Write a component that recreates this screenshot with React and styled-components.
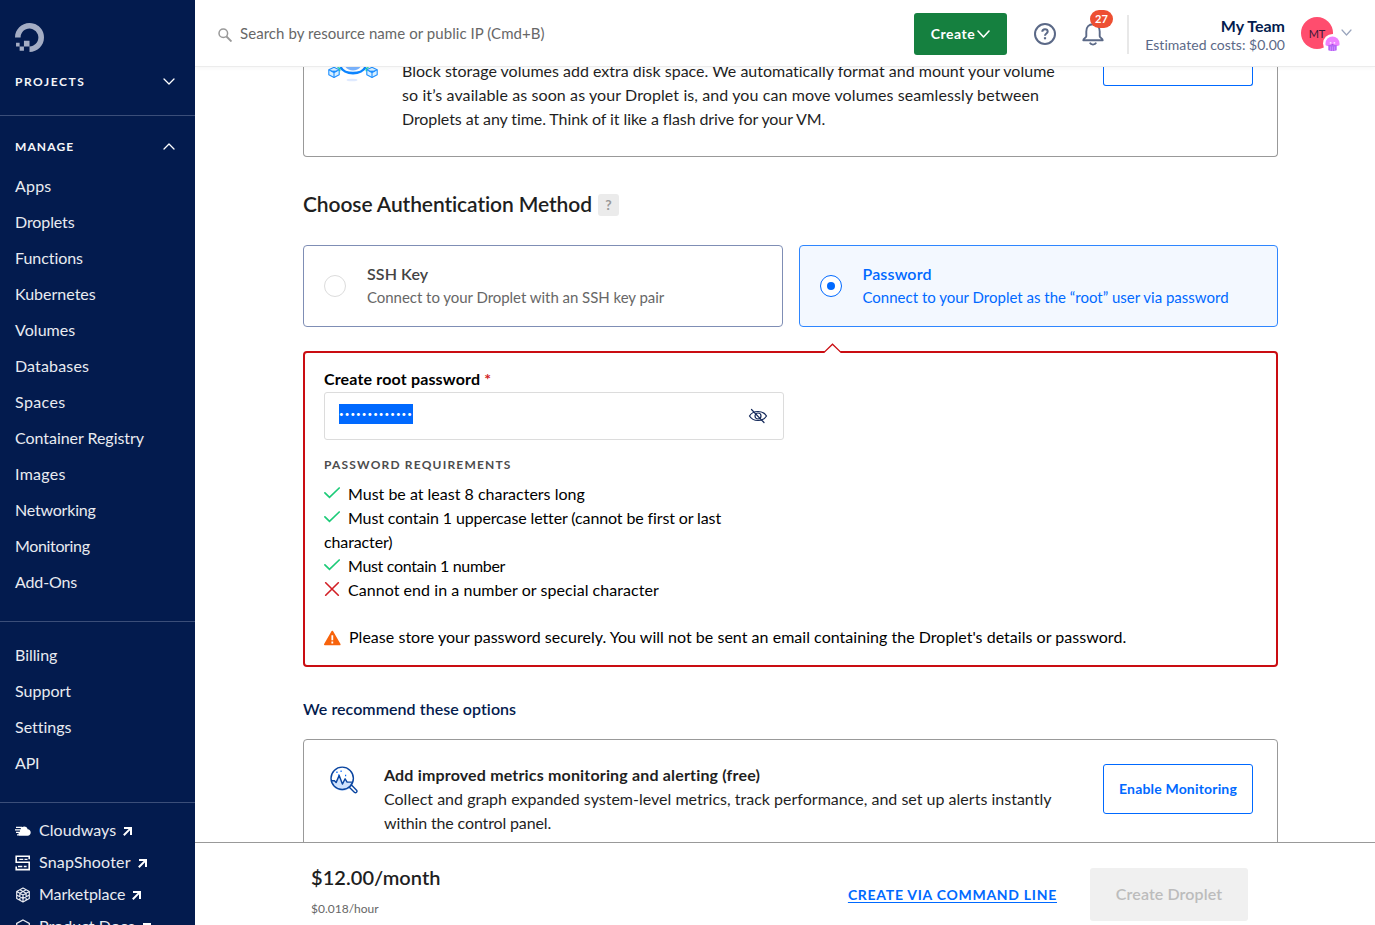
import React from 'react';
import styled, { createGlobalStyle, css } from 'styled-components';

const GlobalStyle = createGlobalStyle`
  * { box-sizing: border-box; }
  body {
    margin: 0;
    background: #fff;
    color: #1f1f1f;
    font-family: Lato, "Liberation Sans", sans-serif;
    font-size: 16px;
    line-height: 24px;
    font-variant-ligatures: none;
  }
  h2, h3, p, ul { margin: 0; padding: 0; }
  ul { list-style: none; }
  svg { display: block; flex: none; }
  button { font-family: inherit; }
`;

const spaced = css`
  letter-spacing: ${(p) => p.$ls || 0}px;
`;

/* ---------- shell ---------- */

const Shell = styled.div`
  display: flex;
  height: 925px;
  overflow: hidden;
`;

const Main = styled.main`
  flex: 1;
  min-width: 0;
  display: flex;
  flex-direction: column;
`;

/* ---------- sidebar ---------- */

const Sidebar = styled.nav`
  width: 195px;
  flex: none;
  height: 925px;
  overflow: hidden;
  background: #031b4e;
  color: #e9ebf1;
`;

const LogoArea = styled.div`
  padding: 23px 15px 0;
  height: 64px;
`;

const NavSection = styled.div`
  border-bottom: 1px solid #3b4e79;
  padding: ${(p) => p.$pad};
`;

const SectionTitle = styled.div`
  display: flex;
  align-items: center;
  justify-content: space-between;
  height: 36px;
  font-size: 12px;
  font-weight: 700;
  color: #f5f6f9;
  padding-right: 5px;
  ${spaced}

  svg { margin-bottom: 1px; }
`;

const NavList = styled.div`
  margin-top: 4px;
`;

const NavItem = styled.div`
  height: 36px;
  line-height: 34px;
  ${spaced}
`;

const ExternalList = styled.div`
  padding: 12px 15px 0;
`;

const ExternalItem = styled.div`
  display: flex;
  align-items: center;
  height: 32px;
  gap: 8px;
  color: #e9ebf1;
  ${spaced}

  span { margin: -2px -1px 0 0; }
`;

/* ---------- header ---------- */

const Header = styled.header`
  flex: none;
  height: 67px;
  display: flex;
  align-items: center;
  padding: 0 23px 0 23px;
  border-bottom: 1px solid #ececec;
  box-shadow: 0 2px 4px rgba(0, 0, 0, 0.03);
  position: relative;
  z-index: 1;
  background: #fff;

  > svg { margin-top: 3px; }
`;

const SearchText = styled.div`
  flex: 1;
  margin-top: -1px;
  padding-left: 8px;
  font-size: 15px;
  color: #676767;
  ${spaced}
`;

const CreateButton = styled.button`
  display: flex;
  align-items: center;
  justify-content: center;
  gap: 2px;
  width: 93px;
  height: 42px;
  margin-top: 1px;
  padding: 0;
  border: 0;
  border-radius: 3px;
  background: #15803f;
  color: #fff;
  font-size: 14px;
  font-weight: 700;
  ${spaced}
`;

const HelpIcon = styled.div`
  margin: 2px 0 0 27px;
`;

const Bell = styled.div`
  position: relative;
  margin: 1px 0 0 26px;
`;

const Count = styled.span`
  position: absolute;
  left: 8px;
  top: -12px;
  width: 23px;
  height: 18px;
  border-radius: 9px;
  background: #ed4f32;
  color: #fff;
  font-size: 11px;
  font-weight: 700;
  line-height: 18px;
  text-align: center;
`;

const Divider = styled.div`
  width: 2px;
  height: 39px;
  margin: 2px 0 0 23px;
  background: #e8e8e8;
`;

const Team = styled.div`
  width: 156px;
  margin-top: 5px;
  text-align: right;
`;

const TeamName = styled.div`
  height: 19px;
  line-height: 17px;
  font-weight: 700;
  color: #031b4e;
`;

const TeamCost = styled.div`
  height: 18px;
  line-height: 18px;
  font-size: 14px;
  color: #5b6987;
  ${spaced}
`;

const Avatar = styled.div`
  position: relative;
  width: 32px;
  height: 32px;
  margin-left: 16px;
  border-radius: 50%;
  background: #ff4d6e;
  color: #3a1838;
  font-size: 11px;
  line-height: 33px;
  text-align: center;
`;

const AvatarBadge = styled.div`
  position: absolute;
  left: 22px;
  top: 17px;
`;

const HeaderChevron = styled.div`
  margin: 0 0 1px 8px;
`;

/* ---------- content ---------- */

const Content = styled.div`
  flex: 1;
  min-height: 0;
  overflow: hidden;
  padding: 0 97px 0 108px;
`;

const OptionCard = styled.section`
  display: flex;
  align-items: flex-start;
  border: 1px solid #999;
  border-radius: ${(p) => (p.$cut ? '0 0 4px 4px' : '4px')};
  ${(p) => p.$cut && css`border-top: 0;`}
  height: ${(p) => p.$h}px;
  padding: ${(p) => (p.$cut ? '0 24px' : '24px 24px 0')};
`;

const VolumeIcon = styled.div`
  width: 74px;
`;

const MetricsIcon = styled.div`
  width: 56px;
  padding: 2px 0 0 2px;
`;

const OptionText = styled.div`
  flex: 1;
  margin-top: ${(p) => p.$top || 0}px;
  white-space: nowrap;
`;

const OptionTitle = styled.div`
  font-weight: 700;
  ${spaced}
`;

const Line = styled.div`
  height: 24px;
  ${spaced}
`;

const OutlineButton = styled.button`
  width: 150px;
  height: ${(p) => (p.$cut ? 19 : 50)}px;
  border: 1px solid #0069ff;
  ${(p) => p.$cut && css`border-top: 0;`}
  border-radius: ${(p) => (p.$cut ? '0 0 3px 3px' : '3px')};
  padding: 0 0 2px;
  background: #fff;
  color: #0069ff;
  font-size: 14px;
  font-weight: 700;
  ${spaced}
`;

const Heading = styled.h2`
  display: flex;
  align-items: center;
  gap: 6px;
  height: 30px;
  margin: 32px 0 26px;
  font-size: 21px;
  font-weight: 600;
  color: #1f1f1f;
  ${spaced}
`;

const HelpBadge = styled.span`
  width: 21px;
  height: 22px;
  margin-top: 2px;
  border-radius: 3px;
  background: #ebebeb;
  color: #999;
  font-size: 14px;
  font-weight: 700;
  line-height: 21px;
  text-align: center;
`;

const Methods = styled.div`
  display: grid;
  grid-template-columns: 1fr 1fr;
  gap: 16px;
`;

const MethodCard = styled.div`
  display: flex;
  align-items: center;
  height: 82px;
  padding-left: 20px;
  border: 1px solid ${(p) => (p.$on ? '#2e86ff' : '#7f8eb5')};
  border-radius: 4px;
  background: ${(p) => (p.$on ? '#f3f8ff' : '#fff')};
  color: ${(p) => (p.$on ? '#0069ff' : '#676767')};
`;

const Radio = styled.span`
  display: grid;
  place-items: center;
  width: 22px;
  height: 22px;
  margin-right: 21px;
  border: 1px solid ${(p) => (p.$on ? '#0069ff' : '#dcdcdc')};
  border-radius: 50%;
  background: #fff;

  &::after {
    content: '';
    width: 8px;
    height: 8px;
    border-radius: 50%;
    background: ${(p) => (p.$on ? '#0069ff' : 'transparent')};
  }
`;

const MethodText = styled.div`
  margin-top: -2px;
`;

const MethodTitle = styled.div`
  font-weight: 600;
  color: ${(p) => (p.$on ? '#0069ff' : '#444')};
  ${spaced}
`;

const MethodNote = styled.div`
  height: 23px;
  line-height: 23px;
  font-size: 15px;
  ${spaced}
`;

const Panel = styled.section`
  position: relative;
  height: 316px;
  margin-top: 24px;
  padding: 14px 19px 0;
  border: 2px solid #ca0d12;
  border-radius: 4px;
  color: #000;
`;

const Caret = styled.svg`
  position: absolute;
  left: 517.5px;
  top: -10px;
`;

const FieldLabel = styled.div`
  height: 25px;
  font-weight: 700;
  ${spaced}

  span { color: #d21f25; }
`;

const PasswordField = styled.div`
  display: flex;
  align-items: center;
  justify-content: space-between;
  width: 460px;
  height: 48px;
  padding: 0 15px 0 14px;
  border: 1px solid #dcdcdc;
  border-radius: 3px;
`;

const Selection = styled.span`
  width: 74px;
  height: 20px;
  margin-bottom: 4px;
  overflow: hidden;
  background: #0069ff;
  color: #fff;
  font-size: 8px;
  line-height: 21px;
  ${spaced}
`;

const RequirementsTitle = styled.h3`
  height: 18px;
  margin-top: 16px;
  font-size: 12px;
  font-weight: 700;
  line-height: 18px;
  color: #4d4d4d;
  ${spaced}
`;

const Requirements = styled.ul`
  width: 460px;
  margin-top: 8px;
`;

const Requirement = styled.li`
  ${spaced}

  svg {
    display: inline-block;
    margin-right: 8px;
    vertical-align: ${(p) => p.$va || 1}px;
  }
`;

const Warning = styled.div`
  display: flex;
  align-items: center;
  gap: 8px;
  height: 24px;
  margin-top: 23px;
  white-space: nowrap;
  ${spaced}

  svg { margin-top: 2px; }
`;

const SubHeading = styled.h3`
  height: 24px;
  margin: 30px 0 18px;
  font-size: 16px;
  font-weight: 600;
  color: #031b4e;
  ${spaced}
`;

/* ---------- footer ---------- */

const Footer = styled.footer`
  flex: none;
  display: flex;
  align-items: flex-start;
  height: 83px;
  padding: 25px 127px 0 116px;
  border-top: 1px solid #999;
  background: #fff;
`;

const Price = styled.div`
  flex: 1;
  margin-top: -5px;
`;

const Monthly = styled.div`
  height: 28px;
  line-height: 28px;
  font-size: 20px;
  font-weight: 600;
  ${spaced}
`;

const Hourly = styled.div`
  margin-top: 8px;
  height: 20px;
  line-height: 20px;
  font-size: 12px;
  color: #676767;
`;

const CommandLink = styled.a`
  margin: 15px 33px 0 0;
  font-size: 14px;
  font-weight: 700;
  color: #0069ff;
  text-decoration: underline;
  text-decoration-thickness: 1px;
  text-underline-offset: 2px;
  ${spaced}
`;

const DropletButton = styled.button`
  width: 158px;
  height: 53px;
  padding: 0 0 3px;
  border: 0;
  border-radius: 3px;
  background: #f0f0f0;
  color: #bcbcbc;
  font-size: 16px;
  font-weight: 600;
  ${spaced}
`;

/* ---------- icons ---------- */

const Chevron = ({ up, color = '#fff', w = 12, h = 7, sw = 1.3 }) => (
  <svg width={w} height={h} viewBox={`0 0 ${w} ${h}`} fill="none" stroke={color} strokeWidth={sw} strokeLinecap="round" strokeLinejoin="round">
    <path d={up ? `M1 ${h - 1}L${w / 2} 1L${w - 1} ${h - 1}` : `M1 1L${w / 2} ${h - 1}L${w - 1} 1`} />
  </svg>
);

const Logo = () => (
  <svg width="29" height="29" viewBox="0 0 24 24" fill="#a4adc4">
    <path d="M12.04 0C5.408-.02.005 5.37.005 11.992h4.638c0-4.923 4.882-8.731 10.064-6.855a6.95 6.95 0 0 1 4.147 4.148c1.889 5.177-1.924 10.055-6.84 10.064v-4.61H7.391v4.623h4.61V24c7.86 0 13.967-7.588 11.397-15.83-1.115-3.59-3.985-6.446-7.575-7.575A12.8 12.8 0 0 0 12.039 0zM7.39 19.362H3.828v3.564H7.39zm-3.563 0v-2.978H.85v2.978z" />
  </svg>
);

const ArrowOut = () => (
  <svg width="9" height="9" viewBox="0 0 9 9" fill="none" stroke="#fff" strokeWidth="2">
    <path d="M1 1.1h7V8M7.6 1.4L0.8 8.2" />
  </svg>
);

const CloudwaysIcon = () => (
  <svg width="16" height="16" viewBox="0 0 16 16">
    <path d="M5.300 12.700c-1.200 0-1.900-.8-1.900-1.700s.6-1.600 1.500-1.800C4.700 6.300 6.400 3.400 9.100 3.400c2 0 3.300 1.300 3.500 2.800 1.900.1 3.100 1.500 3.100 3.300 0 1.900-1.300 3.200-3.100 3.200z" fill="#fff" />
    <path d="M1 4.300h6M0 6.800h5.500M1 9.300h4M2 11.800h3" stroke="#fff" strokeWidth="1.200" />
  </svg>
);

const SnapShooterIcon = () => (
  <svg width="16" height="16" viewBox="0 0 16 16" fill="none" stroke="#fff" strokeWidth="1.600">
    <path d="M14.200 4.200V1.300H1.200v6h13v7.300H1.200V11.500" />
    <path d="M4.300 4.300h4M9.500 4.300h3M3 11.500h4.300M8.800 11.500h2.800" strokeWidth="1.300" />
  </svg>
);

const MarketplaceIcon = () => (
  <svg width="16" height="16" viewBox="0 0 16 16" fill="none" stroke="#e9ebf1" strokeWidth="1.200" strokeLinejoin="round">
    <path d="M8 1l6.300 3.500v7L8 15l-6.300-3.500v-7zM1.700 4.500L8 8l6.300-3.500M8 8v7M4.800 2.800l6.300 3.500v7M11.200 2.800L4.900 6.300v7M1.700 8L8 11.500 14.300 8" />
  </svg>
);

const DocsIcon = () => (
  <svg width="16" height="16" viewBox="0 0 16 16" fill="none" stroke="#e9ebf1" strokeWidth="1.300">
    <path d="M8 1l6.300 3.500v7L8 15l-6.300-3.500v-7z" />
  </svg>
);

const SearchIcon = () => (
  <svg width="14" height="14" viewBox="0 0 14 14" fill="none" stroke="#999" strokeWidth="1.500">
    <circle cx="5.300" cy="5.300" r="4.300" />
    <path d="M8.500 8.500l5 5" strokeWidth="1.900" />
  </svg>
);

const QuestionIcon = () => (
  <svg width="22" height="22" viewBox="0 0 22 22" fill="none" stroke="#5b6987" strokeWidth="2">
    <circle cx="11" cy="11" r="10" />
    <path d="M8.300 8.800c0-1.600 1.100-2.600 2.700-2.600s2.700 1 2.700 2.400c0 1.900-2.700 1.900-2.700 4.100" />
    <path d="M11 14.200v2.100" strokeWidth="2.200" />
  </svg>
);

const BellIcon = () => (
  <svg width="22" height="24" viewBox="0 0 22 24" fill="none" stroke="#5b6987" strokeWidth="1.900" strokeLinejoin="round">
    <path d="M4.300 9.500C4.300 5 7 2.200 11 2.200S17.700 5 17.700 9.500v4.800c0 1.500 3 2 3 3.900H1.300c0-1.900 3-2.400 3-3.900z" />
    <path d="M7.800 20.700c.6 1.300 1.700 1.900 3.200 1.900s2.600-.6 3.200-1.900" />
  </svg>
);

const JellyBadge = () => (
  <svg width="19" height="19" viewBox="0 0 19 19">
    <circle cx="9.500" cy="9.500" r="9.500" fill="#fff" />
    <path d="M2.500 11V9.500a7 7 0 0 1 14 0V11c0 1.800-14 1.800-14 0z" fill="#ee82ff" />
    <path d="M5.300 11h8.400v5.300c-1.300 1-7.100 1-8.400 0z" fill="#b567f5" />
    <path d="M7.500 12.500v4.300M9.500 12.500v4.500M11.500 12.500v4.300" stroke="#d68cff" strokeWidth=".8" />
    <path d="M6.800 8.900h1.600M10.600 8.900h1.600" stroke="#fff" strokeWidth="1.300" />
    <path d="M8.500 10.500h2" stroke="#a050e0" strokeWidth=".9" />
  </svg>
);

const Cube = ({ x }) => (
  <g transform={`translate(${x} 0)`} fill="none" strokeWidth="1.100" strokeLinejoin="round">
    <path d="M.8 2.800L6 .3l5.200 2.500v5L6 10.500.8 7.800z" fill="#d9f0ff" stroke="#1f8fff" />
    <path d="M.8 2.800L6 5.400l5.200-2.600M6 5.400v5" stroke="#1f8fff" />
    <path d="M3 3.900h6L6 5.600z" fill="#1f8fff" stroke="#1f8fff" strokeWidth=".6" />
  </g>
);

const VolumesArt = () => (
  <svg width="50" height="15" viewBox="0 0 50 15">
    <ellipse cx="24" cy="13" rx="5.500" ry="1.300" fill="#dfeaff" />
    <path d="M12.500 0a13 8.500 0 0 0 25 0" fill="#fff" stroke="#0c84ff" strokeWidth="2.600" />
    <path d="M17.500 0c3 4.600 12 4.600 15 0z" fill="#7ab4ff" />
    <Cube x={0} />
    <Cube x={38} />
    <path d="M9.500 .3l2.300 1.400v2.500M40.500 .3l-2.300 1.400v2.500" fill="none" stroke="#16cfa0" strokeWidth="1.200" />
  </svg>
);

const MetricsArt = () => (
  <svg width="28" height="28" viewBox="0 0 28 28" fill="none" stroke="#0a45a0" strokeWidth="1.400" strokeLinejoin="round">
    <path d="M1.500 14.800h3l1.700 1.400 3-6.700 3.300 8.500 2.600-5 2.400 3.500h6A11.200 11.200 0 0 1 1.500 14.800z" fill="#cfe2fd" stroke="none" />
    <circle cx="12.200" cy="12.300" r="11.200" />
    <path d="M1.500 14.800h3l1.600 1.800 3.100-7.200 3.200 8.700 2.700-5.300 2 3.300h5.500" />
    <path d="M19.300 21.300l2.200-2.200 5.300 5.400c.7 1.400-.8 2.900-2.200 2z" fill="#fff" />
    <path d="M6.300 6.200h1.300M10.500 5.200h1.200M8.300 9h1M15 9.500h1.200" stroke="#0069ff" />
  </svg>
);

const EyeOff = () => (
  <svg width="20" height="16" viewBox="0 0 20 16" fill="none" stroke="#14295a" strokeWidth="1.200" strokeLinecap="round">
    <path d="M1.500 8C5 2 15 2 18.500 8 15 14 5 14 1.500 8z" />
    <circle cx="10" cy="8" r="3" />
    <path d="M3.500 1.500l12.500 13" />
  </svg>
);

const Check = () => (
  <svg width="16" height="12" viewBox="0 0 16 12" fill="none" stroke="#1ccb78" strokeWidth="1.700" strokeLinecap="round">
    <path d="M.9 5.800l4.600 4.600L15.200 1" />
  </svg>
);

const Cross = () => (
  <svg width="16" height="14" viewBox="0 0 16 14" fill="none" stroke="#d21f25" strokeWidth="1.600" strokeLinecap="round">
    <path d="M1.700 .8l12.600 12.400M14.300 .8L1.700 13.200" />
  </svg>
);

const WarnIcon = () => (
  <svg width="17" height="16" viewBox="0 0 17 16">
    <path d="M8.300 1.500l7.500 13H.8z" fill="#f7630c" stroke="#f7630c" strokeWidth="1.600" strokeLinejoin="round" />
    <path d="M8.300 5.200v5M8.300 11.500v2" stroke="#fff" strokeWidth="1.800" />
  </svg>
);

/* ---------- data ---------- */

const manage = [
  ['Apps', 0.2], ['Droplets', -0.1], ['Functions', -0.05], ['Kubernetes', 0], ['Volumes', 0.05], ['Databases', 0.15],
  ['Spaces', 0.4], ['Container Registry', -0.04], ['Images', 0.3], ['Networking', -0.2], ['Monitoring', -0.35], ['Add-Ons', -0.15],
];
const account = [['Billing', -0.05], ['Support', 0], ['Settings', 0], ['API', -0.2]];
const external = [
  ['Cloudways', 0.05, CloudwaysIcon], ['SnapShooter', 0.2, SnapShooterIcon],
  ['Marketplace', -0.05, MarketplaceIcon], ['Product Docs', 0.05, DocsIcon],
];

export default function App() {
  return (
    <Shell>
      <GlobalStyle />
      <Sidebar>
        <LogoArea><Logo /></LogoArea>
        <NavSection $pad="0 15px 15px">
          <SectionTitle $ls={1.55}>PROJECTS<Chevron /></SectionTitle>
        </NavSection>
        <NavSection $pad="13px 15px 20px">
          <SectionTitle $ls={1.1}>MANAGE<Chevron up /></SectionTitle>
          <NavList>
            {manage.map(([label, ls]) => <NavItem key={label} $ls={ls}>{label}</NavItem>)}
          </NavList>
        </NavSection>
        <NavSection $pad="16px 15px 20px">
          {account.map(([label, ls]) => <NavItem key={label} $ls={ls}>{label}</NavItem>)}
        </NavSection>
        <ExternalList>
          {external.map(([label, ls, Icon]) => (
            <ExternalItem key={label} $ls={ls}><Icon /><span>{label}</span><ArrowOut /></ExternalItem>
          ))}
        </ExternalList>
      </Sidebar>

      <Main>
        <Header>
          <SearchIcon />
          <SearchText $ls={0.06}>Search by resource name or public IP (Cmd+B)</SearchText>
          <CreateButton $ls={0.5}>Create<Chevron w={13} h={8} sw={1.6} /></CreateButton>
          <HelpIcon><QuestionIcon /></HelpIcon>
          <Bell><BellIcon /><Count>27</Count></Bell>
          <Divider />
          <Team>
            <TeamName>My Team</TeamName>
            <TeamCost $ls={0.03}>Estimated costs: $0.00</TeamCost>
          </Team>
          <Avatar>MT<AvatarBadge><JellyBadge /></AvatarBadge></Avatar>
          <HeaderChevron><Chevron color="#9aa5bd" w={11} h={7} sw={1.2} /></HeaderChevron>
        </Header>

        <Content>
          <OptionCard $cut $h={90}>
            <VolumeIcon><VolumesArt /></VolumeIcon>
            <OptionText $top={-8}>
              <Line>Block storage volumes add extra disk space. We automatically format and mount your volume</Line>
              <Line $ls={0.1}>so it’s available as soon as your Droplet is, and you can move volumes seamlessly between</Line>
              <Line $ls={-0.09}>Droplets at any time. Think of it like a flash drive for your VM.</Line>
            </OptionText>
            <OutlineButton $cut />
          </OptionCard>

          <Heading $ls={-0.1}>Choose Authentication Method<HelpBadge>?</HelpBadge></Heading>

          <Methods>
            <MethodCard>
              <Radio />
              <MethodText>
                <MethodTitle $ls={0.1}>SSH Key</MethodTitle>
                <MethodNote $ls={-0.04}>Connect to your Droplet with an SSH key pair</MethodNote>
              </MethodText>
            </MethodCard>
            <MethodCard $on>
              <Radio $on />
              <MethodText>
                <MethodTitle $on $ls={0.15}>Password</MethodTitle>
                <MethodNote>Connect to your Droplet as the “root” user via password</MethodNote>
              </MethodText>
            </MethodCard>
          </Methods>

          <Panel>
            <Caret width="19" height="11" viewBox="0 0 19 11">
              <path d="M1 9.600L9.500 1.200 18 9.600V11H1z" fill="#fff" />
              <path d="M.8 9.600L9.500 1.200l8.700 8.400" fill="none" stroke="#ca0d12" strokeWidth="1.300" />
            </Caret>
            <FieldLabel $ls={0.16}>Create root password <span>*</span></FieldLabel>
            <PasswordField>
              <Selection $ls={1.05}>•••••••••••••</Selection>
              <EyeOff />
            </PasswordField>
            <RequirementsTitle $ls={1.19}>PASSWORD REQUIREMENTS</RequirementsTitle>
            <Requirements>
              <Requirement><Check />Must be at least 8 characters long</Requirement>
              <Requirement $ls={-0.12}><Check />Must contain 1 uppercase letter (cannot be first or last character)</Requirement>
              <Requirement $ls={-0.33}><Check />Must contain 1 number</Requirement>
              <Requirement $ls={0.05} $va={0.01}><Cross />Cannot end in a number or special character</Requirement>
            </Requirements>
            <Warning $ls={0.03}>
              <WarnIcon />
              Please store your password securely. You will not be sent an email containing the Droplet's details or password.
            </Warning>
          </Panel>

          <SubHeading $ls={0.05}>We recommend these options</SubHeading>

          <OptionCard $h={150}>
            <MetricsIcon><MetricsArt /></MetricsIcon>
            <OptionText $top={-1}>
              <OptionTitle $ls={0.17}>Add improved metrics monitoring and alerting (free)</OptionTitle>
              <Line $ls={0.01}>Collect and graph expanded system-level metrics, track performance, and set up alerts instantly</Line>
              <Line $ls={-0.14}>within the control panel.</Line>
            </OptionText>
            <OutlineButton $ls={0.18}>Enable Monitoring</OutlineButton>
          </OptionCard>
        </Content>

        <Footer>
          <Price>
            <Monthly $ls={0.05}>$12.00/month</Monthly>
            <Hourly>$0.018/hour</Hourly>
          </Price>
          <CommandLink $ls={0.72}>CREATE VIA COMMAND LINE</CommandLink>
          <DropletButton $ls={0.1}>Create Droplet</DropletButton>
        </Footer>
      </Main>
    </Shell>
  );
}
